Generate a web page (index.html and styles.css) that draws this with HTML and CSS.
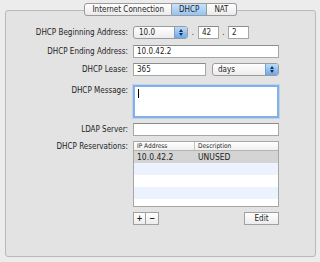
FILE: index.html
```html
<!DOCTYPE html>
<html>
<head>
    <meta charset="utf-8">
    <title>DHCP</title>
    <link rel="stylesheet" href="styles.css">
</head>
<body>

<div class="panel">
    <div class="tabs">
        <div class="tab">Internet Connection</div>
        <div class="tab active">DHCP</div>
        <div class="tab">NAT</div>
    </div>

    <div class="form">
        <!-- 起始地址 -->
        <div class="row r-begin">
            <label>DHCP Beginning Address:</label>
            <div class="ctrl addr">
                <div class="popup w-net"><span>10.0</span><i class="arrows"></i></div>
                <span class="dot">.</span>
                <div class="field w-oct">42</div>
                <span class="dot">.</span>
                <div class="field w-oct">2</div>
            </div>
        </div>

        <div class="row r-end">
            <label>DHCP Ending Address:</label>
            <div class="field">10.0.42.2</div>
        </div>

        <div class="row r-lease">
            <label>DHCP Lease:</label>
            <div class="ctrl lease">
                <div class="field w-lease">365</div>
                <div class="popup w-unit"><span>days</span><i class="arrows"></i></div>
            </div>
        </div>

        <div class="row r-msg">
            <label class="top">DHCP Message:</label>
            <div class="field message"><span class="caret"></span></div>
        </div>

        <div class="row r-ldap">
            <label>LDAP Server:</label>
            <div class="field"></div>
        </div>

        <div class="row r-res">
            <label class="top">DHCP Reservations:</label>
            <div class="table">
                <div class="thead">
                    <div class="col-ip">IP Address</div>
                    <div class="col-desc">Description</div>
                </div>
                <div class="trow selected">
                    <div class="col-ip">10.0.42.2</div>
                    <div class="col-desc">UNUSED</div>
                </div>
                <div class="trow alt"></div>
                <div class="trow"></div>
                <div class="trow alt"></div>
                <div class="trow"></div>
            </div>
        </div>

        <div class="row r-buttons">
            <span></span>
            <div class="ctrl buttons">
                <div class="pm">
                    <div class="btn-sq">+</div>
                    <div class="btn-sq">&minus;</div>
                </div>
                <div class="btn">Edit</div>
            </div>
        </div>
    </div>
</div>

</body>
</html>
```

FILE: styles.css
```css
body {
    margin: 0;
    background: #ececec;
    font-family: "DejaVu Sans Condensed", "DejaVu Sans", sans-serif;
    font-size: 8px;
    color: #1e1e1e;
}

.panel {
    margin: 10px 4px 0 5px;
    height: 245px;
    border: 1px solid #b9b9b9;
    border-radius: 3px;
    background: #e3e3e3;
}

.tabs {
    display: flex;
    justify-content: center;
    margin-top: -8px;
}

.tab {
    height: 11px;
    line-height: 11px;
    padding: 0 7px;
    border: 1px solid #9a9a9a;
    border-left: none;
    background: linear-gradient(#ffffff, #eaeaea);
    font-size: 8px;
}

.tab:first-child {
    border-left: 1px solid #9a9a9a;
    border-radius: 3px 0 0 3px;
    padding-left: 8px;
}

.tab:last-child {
    border-radius: 0 3px 3px 0;
    padding-right: 8px;
}

.tab.active {
    background: linear-gradient(#c8e2fb, #96c4f2);
}

.form {
    display: flex;
    flex-direction: column;
}

.row {
    display: grid;
    grid-template-columns: 122px 146px;
    column-gap: 5px;
    align-items: center;
}

.row label {
    text-align: right;
    white-space: nowrap;
}

.row label.top {
    align-self: start;
}

.r-begin { margin-top: 10px; }
.r-end { margin-top: 6px; }
.r-lease { margin-top: 5px; }
.r-msg { margin-top: 9px; }
.r-msg label { padding-top: 1px; }
.r-ldap { margin-top: 5px; }
.r-res { margin-top: 5px; }
.r-res label { padding-top: 1px; }
.r-buttons { margin-top: 5px; }

.field {
    box-sizing: border-box;
    height: 13px;
    line-height: 11px;
    padding: 0 3px;
    border: 1px solid #a6a6a6;
    border-top-color: #8c8c8c;
    background: #fff;
}

.field.message {
    height: 33px;
    border: 2px solid #86b0e4;
    box-shadow: 0 0 0 1px #b9d3f1;
    padding: 2px 3px;
}

.caret {
    display: inline-block;
    width: 1px;
    height: 9px;
    background: #000;
}

.ctrl {
    display: flex;
    align-items: center;
}

.addr .dot {
    width: 10px;
    text-align: center;
}

.w-net { width: 55px; }
.w-oct { width: 21px; }
.addr .dot:nth-of-type(2) { width: 9px; }

.lease {
    justify-content: space-between;
}

.w-lease { width: 73px; }
.w-unit { width: 67px; }

.popup {
    box-sizing: border-box;
    height: 13px;
    display: flex;
    align-items: stretch;
    border: 1px solid #9b9b9b;
    border-radius: 3px;
    background: linear-gradient(#ffffff, #ececec);
    overflow: hidden;
}

.popup span {
    flex: 1;
    line-height: 11px;
    padding-left: 5px;
}

.arrows {
    width: 12px;
    border-left: 1px solid #7f9fc6;
    background: linear-gradient(#bcdcfb, #6aa8ea);
    position: relative;
}

.arrows::before,
.arrows::after {
    content: "";
    position: absolute;
    left: 4px;
    border-left: 2px solid transparent;
    border-right: 2px solid transparent;
}

.arrows::before {
    top: 2px;
    border-bottom: 3px solid #1d2c44;
}

.arrows::after {
    bottom: 2px;
    border-top: 3px solid #1d2c44;
}

.table {
    box-sizing: border-box;
    height: 66px;
    border: 1px solid #a6a6a6;
    background: #fff;
    overflow: hidden;
}

.thead,
.trow {
    display: flex;
}

.thead {
    height: 8px;
    line-height: 8px;
    font-size: 6.5px;
    border-bottom: 1px solid #b4b4b4;
    background: linear-gradient(#ffffff, #f0f0f0);
}

.thead .col-ip {
    border-right: 1px solid #c4c4c4;
}

.col-ip {
    box-sizing: border-box;
    width: 61px;
    padding-left: 3px;
}

.col-desc {
    padding-left: 3px;
}

.trow {
    height: 12px;
    line-height: 12px;
    font-size: 8.5px;
}

.trow.selected {
    background: #d4d4d4;
}

.trow.alt {
    background: #edf3fe;
}

.buttons {
    justify-content: space-between;
}

.pm {
    display: flex;
}

.btn-sq {
    box-sizing: border-box;
    width: 13px;
    height: 13px;
    line-height: 11px;
    text-align: center;
    border: 1px solid #a0a0a0;
    background: linear-gradient(#ffffff, #ececec);
    font-weight: bold;
}

.btn-sq + .btn-sq {
    border-left: none;
}

.btn {
    box-sizing: border-box;
    width: 35px;
    height: 13px;
    line-height: 11px;
    text-align: center;
    border: 1px solid #a0a0a0;
    background: linear-gradient(#ffffff, #ececec);
}
```
